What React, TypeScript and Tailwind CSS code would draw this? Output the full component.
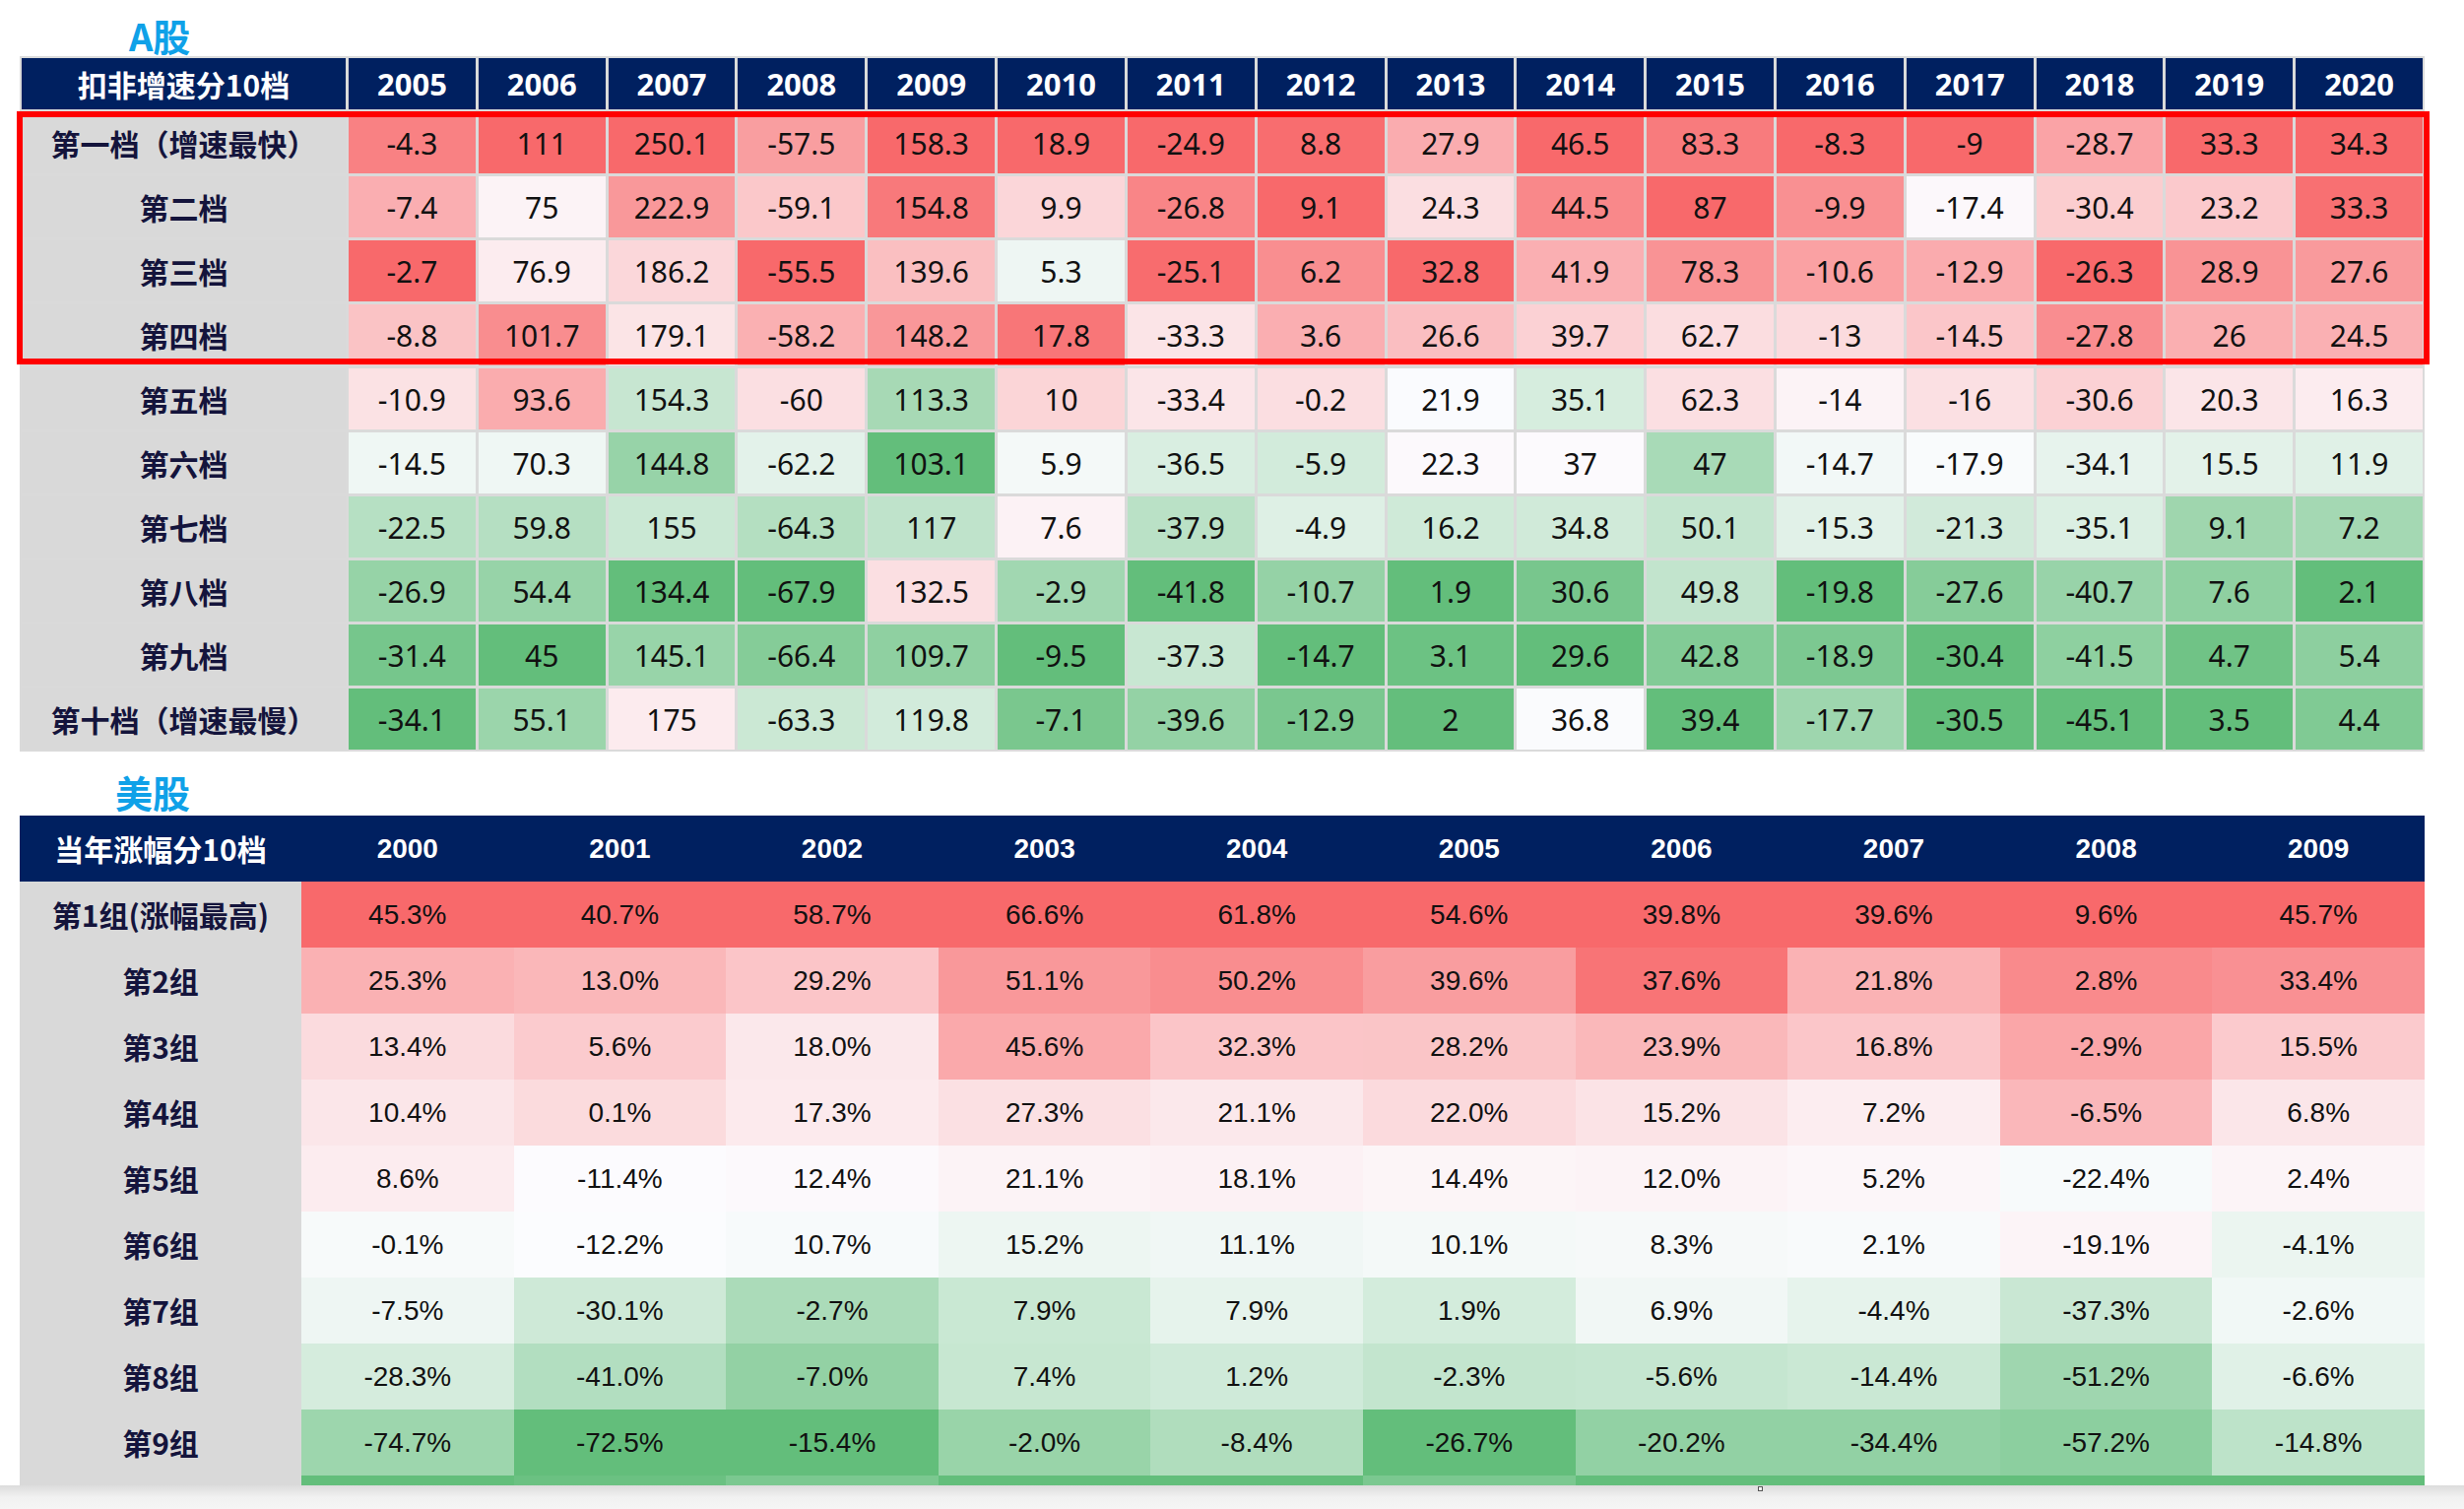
const A_YEARS = [2005, 2006, 2007, 2008, 2009, 2010, 2011, 2012, 2013, 2014, 2015, 2016, 2017, 2018, 2019, 2020];

const A_ROWS: { label: string; values: number[] }[] = [
  { label: "第一档（增速最快）", values: [-4.3, 111, 250.1, -57.5, 158.3, 18.9, -24.9, 8.8, 27.9, 46.5, 83.3, -8.3, -9, -28.7, 33.3, 34.3] },
  { label: "第二档", values: [-7.4, 75, 222.9, -59.1, 154.8, 9.9, -26.8, 9.1, 24.3, 44.5, 87, -9.9, -17.4, -30.4, 23.2, 33.3] },
  { label: "第三档", values: [-2.7, 76.9, 186.2, -55.5, 139.6, 5.3, -25.1, 6.2, 32.8, 41.9, 78.3, -10.6, -12.9, -26.3, 28.9, 27.6] },
  { label: "第四档", values: [-8.8, 101.7, 179.1, -58.2, 148.2, 17.8, -33.3, 3.6, 26.6, 39.7, 62.7, -13, -14.5, -27.8, 26, 24.5] },
  { label: "第五档", values: [-10.9, 93.6, 154.3, -60, 113.3, 10, -33.4, -0.2, 21.9, 35.1, 62.3, -14, -16, -30.6, 20.3, 16.3] },
  { label: "第六档", values: [-14.5, 70.3, 144.8, -62.2, 103.1, 5.9, -36.5, -5.9, 22.3, 37, 47, -14.7, -17.9, -34.1, 15.5, 11.9] },
  { label: "第七档", values: [-22.5, 59.8, 155, -64.3, 117, 7.6, -37.9, -4.9, 16.2, 34.8, 50.1, -15.3, -21.3, -35.1, 9.1, 7.2] },
  { label: "第八档", values: [-26.9, 54.4, 134.4, -67.9, 132.5, -2.9, -41.8, -10.7, 1.9, 30.6, 49.8, -19.8, -27.6, -40.7, 7.6, 2.1] },
  { label: "第九档", values: [-31.4, 45, 145.1, -66.4, 109.7, -9.5, -37.3, -14.7, 3.1, 29.6, 42.8, -18.9, -30.4, -41.5, 4.7, 5.4] },
  { label: "第十档（增速最慢）", values: [-34.1, 55.1, 175, -63.3, 119.8, -7.1, -39.6, -12.9, 2, 36.8, 39.4, -17.7, -30.5, -45.1, 3.5, 4.4] },
];

const US_YEARS = [2000, 2001, 2002, 2003, 2004, 2005, 2006, 2007, 2008, 2009];

const US_ROWS: { label: string; values: number[] }[] = [
  { label: "第1组(涨幅最高)", values: [45.3, 40.7, 58.7, 66.6, 61.8, 54.6, 39.8, 39.6, 9.6, 45.7] },
  { label: "第2组", values: [25.3, 13.0, 29.2, 51.1, 50.2, 39.6, 37.6, 21.8, 2.8, 33.4] },
  { label: "第3组", values: [13.4, 5.6, 18.0, 45.6, 32.3, 28.2, 23.9, 16.8, -2.9, 15.5] },
  { label: "第4组", values: [10.4, 0.1, 17.3, 27.3, 21.1, 22.0, 15.2, 7.2, -6.5, 6.8] },
  { label: "第5组", values: [8.6, -11.4, 12.4, 21.1, 18.1, 14.4, 12.0, 5.2, -22.4, 2.4] },
  { label: "第6组", values: [-0.1, -12.2, 10.7, 15.2, 11.1, 10.1, 8.3, 2.1, -19.1, -4.1] },
  { label: "第7组", values: [-7.5, -30.1, -2.7, 7.9, 7.9, 1.9, 6.9, -4.4, -37.3, -2.6] },
  { label: "第8组", values: [-28.3, -41.0, -7.0, 7.4, 1.2, -2.3, -5.6, -14.4, -51.2, -6.6] },
  { label: "第9组", values: [-74.7, -72.5, -15.4, -2.0, -8.4, -26.7, -20.2, -34.4, -57.2, -14.8] },
];

// last group is cut off by the window edge, only its colour strip shows
const US_LAST_ROW = [-123, -69.5, -11.1, -12.85, -31.4, -20.5, -33.8, -51.5, -70.7, -36];

// excel 3-colour scale: green (min) -> white (50th pct) -> red (max)
const LOW = [99, 190, 123];
const MID = [252, 252, 255];
const HIGH = [248, 105, 107];

const median = (xs: number[]) => {
  const s = [...xs].sort((a, b) => a - b);
  const m = Math.floor(s.length / 2);
  return s.length % 2 ? s[m] : (s[m - 1] + s[m]) / 2;
};

const mix = (a: number[], b: number[], t: number) =>
  `rgb(${a.map((x, i) => Math.round(x + (b[i] - x) * t)).join(",")})`;

const columnColors = (rows: number[][]) => {
  const scales = rows[0].map((_, c) => {
    const col = rows.map((r) => r[c]);
    const lo = Math.min(...col);
    const hi = Math.max(...col);
    const mid = median(col);
    return (v: number) =>
      v >= mid
        ? mix(MID, HIGH, hi === mid ? 0 : (v - mid) / (hi - mid))
        : mix(MID, LOW, (mid - v) / (mid - lo));
  });
  return rows.map((r) => r.map((v, c) => scales[c](v)));
};

const aColors = columnColors(A_ROWS.map((r) => r.values));
const usColors = columnColors([...US_ROWS.map((r) => r.values), US_LAST_ROW]);

const AShareTable = () => (
  <div className="relative w-[2442px]">
    <div className="grid grid-cols-[329px_repeat(16,minmax(0,1fr))] gap-[3px] bg-[#dadada] p-[2px]">
      <div className="h-[52px] flex items-center justify-center bg-[#002060] text-white text-[30px] font-bold font-['Noto_Sans_CJK_SC',sans-serif]">
        扣非增速分10档
      </div>
      {A_YEARS.map((y) => (
        <div
          key={y}
          className="h-[52px] flex items-center justify-center bg-[#002060] text-white text-[31px] font-bold font-['Noto_Sans','Noto_Sans_CJK_SC',sans-serif]"
        >
          {y}
        </div>
      ))}
      {A_ROWS.map((row, r) => (
        <div key={row.label} className="contents">
          <div className="h-[62px] flex items-center justify-center bg-[#d9d9d9] text-[#14143c] text-[30px] font-bold font-['Noto_Sans_CJK_SC',sans-serif]">
            {row.label}
          </div>
          {row.values.map((v, c) => (
            <div
              key={c}
              className="h-[62px] flex items-center justify-center text-[#111] text-[30px] font-['Noto_Sans','Noto_Sans_CJK_SC',sans-serif]"
              style={{ backgroundColor: aColors[r][c] }}
            >
              {v}
            </div>
          ))}
        </div>
      ))}
    </div>
    {/* highlight frame over the top four bands */}
    <div className="absolute left-[-3px] top-[56px] w-[2450px] h-[257px] border-[6px] border-[#ff0000] pointer-events-none" />
  </div>
);

const USTable = () => (
  <div className="w-[2442px] grid grid-cols-[286px_repeat(10,minmax(0,1fr))]">
    <div className="h-[67px] flex items-center justify-center bg-[#002060] text-white text-[30px] font-bold font-['Noto_Sans_CJK_SC',sans-serif]">
      当年涨幅分10档
    </div>
    {US_YEARS.map((y) => (
      <div
        key={y}
        className="h-[67px] flex items-center justify-center bg-[#002060] text-white text-[28px] font-bold font-['Liberation_Sans',sans-serif]"
      >
        {y}
      </div>
    ))}
    {US_ROWS.map((row, r) => (
      <div key={row.label} className="contents">
        <div className="h-[67px] flex items-center justify-center bg-[#d9d9d9] text-[#14143c] text-[30px] font-bold font-['Noto_Sans_CJK_SC',sans-serif]">
          {row.label}
        </div>
        {row.values.map((v, c) => (
          <div
            key={c}
            className="h-[67px] flex items-center justify-center text-[#111] text-[28px] font-['Liberation_Sans',sans-serif]"
            style={{ backgroundColor: usColors[r][c] }}
          >
            {v.toFixed(1)}%
          </div>
        ))}
      </div>
    ))}
    <div className="h-[67px] bg-[#d9d9d9]" />
    {US_LAST_ROW.map((_, c) => (
      <div key={c} className="h-[67px]" style={{ backgroundColor: usColors[US_ROWS.length][c] }} />
    ))}
  </div>
);

export default function App() {
  return (
    <div className="w-full h-[1532px] flex flex-col bg-white overflow-hidden">
      <div className="h-[1508px] overflow-hidden pl-[20px] pt-[15px]">
        <div className="h-[41px] pl-[111px] leading-[41px] text-[38px] font-bold text-[#0fa1e8] font-['Noto_Sans_CJK_SC',sans-serif]">
          A股
        </div>
        <div className="mt-[1px]">
          <AShareTable />
        </div>
        <div className="mt-[20px] h-[41px] pl-[97px] leading-[41px] text-[38px] font-bold text-[#0fa1e8] font-['Noto_Sans_CJK_SC',sans-serif]">
          美股
        </div>
        <div className="mt-[4px]">
          <USTable />
        </div>
      </div>
      <div className="relative h-[24px] bg-gradient-to-b from-[#dcdcdc] via-[#f1f1f1] to-[#f5f5f5]">
        <div className="absolute left-[1785px] top-[1px] w-[5px] h-[5px] border border-[#555] bg-white" />
      </div>
    </div>
  );
}
